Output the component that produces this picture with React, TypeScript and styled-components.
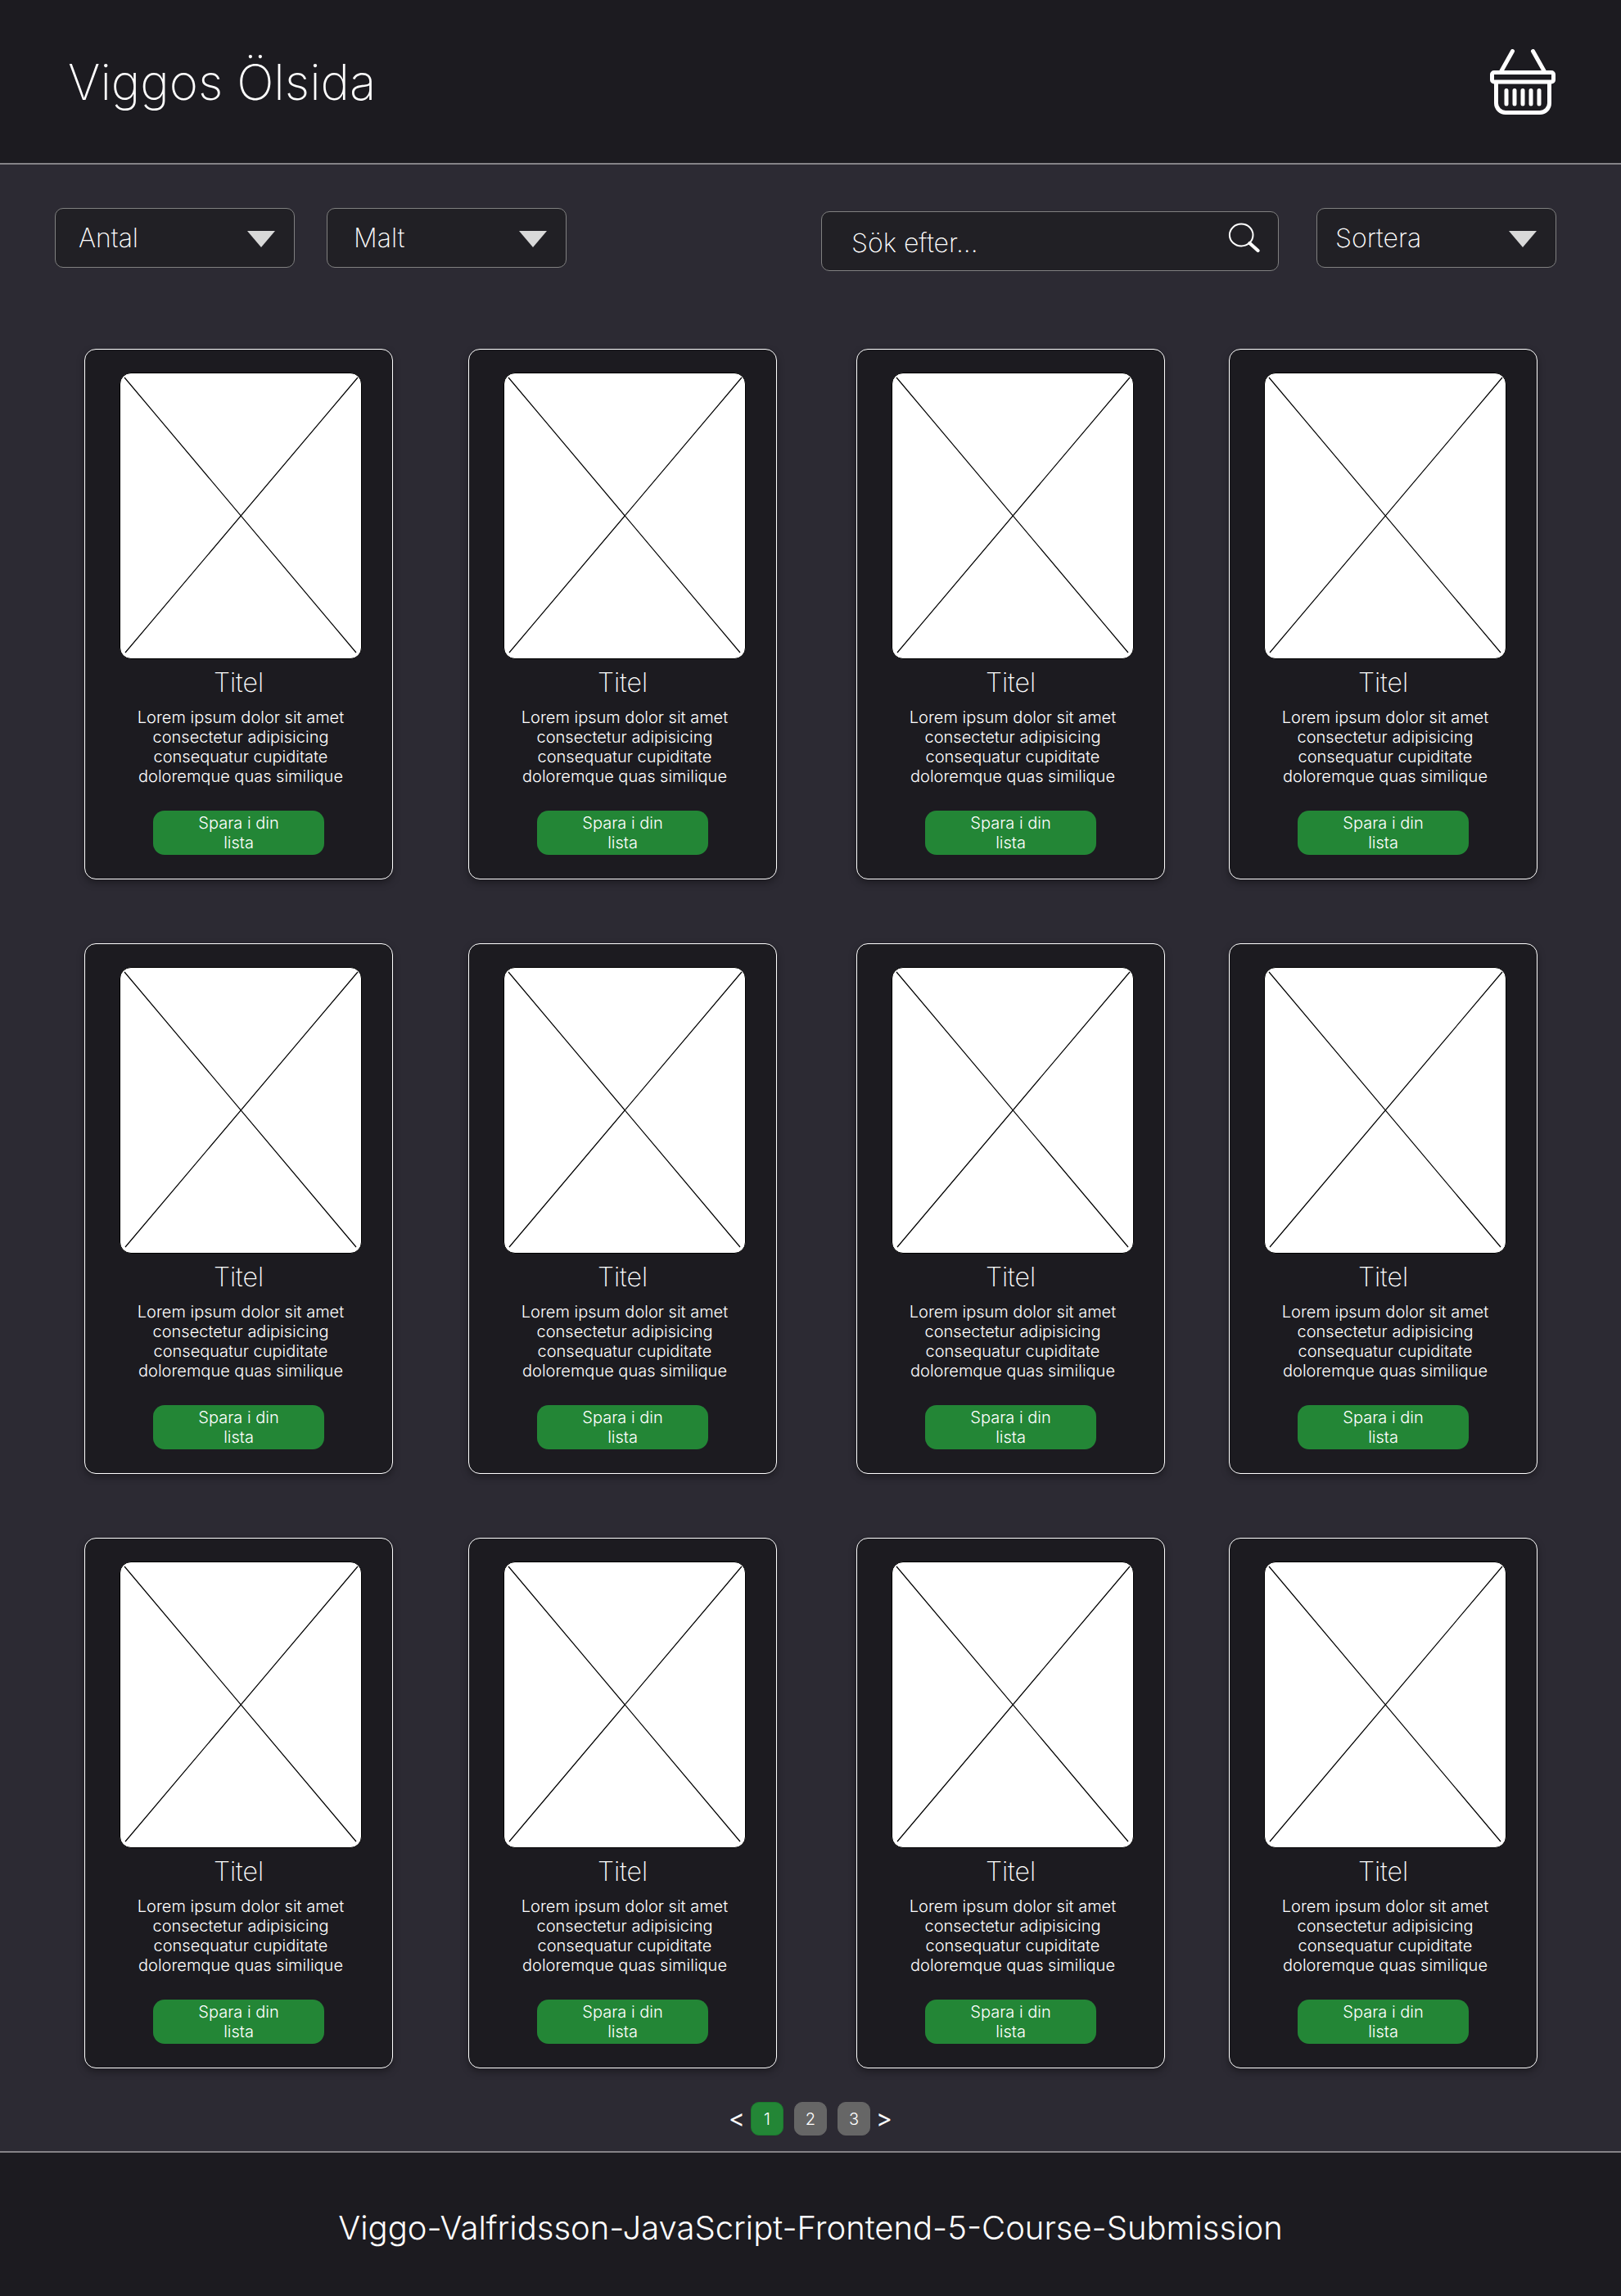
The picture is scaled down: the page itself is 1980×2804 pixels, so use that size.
import React from "react";
import styled, { createGlobalStyle, css } from "styled-components";

const color = {
  page: "#2c2a33",
  surface: "#1c1b20",
  field: "#212025",
  fieldBorder: "#808080",
  rule: "#858387",
  green: "#238636",
  greenDark: "#1b7a2e",
  grey: "#666666",
  arrow: "#d9d9d9",
  text: "#ffffff",
};

const GlobalStyle = createGlobalStyle`
  *, *::before, *::after { box-sizing: border-box; }
  body {
    margin: 0;
    background: ${color.page};
    color: ${color.text};
    font-family: Inter, "Liberation Sans", sans-serif;
    font-weight: 300;
  }
  button, input, select { font: inherit; color: inherit; }
  h1, h2, p { margin: 0; font-weight: inherit; }
`;

const Page = styled.div`
  display: flex;
  flex-direction: column;
  min-height: 100vh;
`;

const Header = styled.header`
  display: flex;
  align-items: center;
  justify-content: space-between;
  padding: 60px 80px 59px 83px;
  background: ${color.surface};
  border-bottom: 2px solid ${color.rule};
`;

const SiteTitle = styled.h1`
  && { font-weight: 200; }
  font-size: 60px;
  line-height: 72px;
`;

const CartButton = styled.button`
  display: block;
  padding: 0;
  border: 0;
  background: none;
  cursor: pointer;
  svg { display: block; }
`;

const Toolbar = styled.div`
  display: flex;
  justify-content: space-between;
  gap: 40px;
  padding: 53px 79px 0 67px;
`;

const ToolGroup = styled.div<{ $gap: number; $end?: boolean }>`
  display: flex;
  flex: ${(p) => (p.$end ? "0 1 898px" : "0 1 auto")};
  gap: ${(p) => p.$gap}px;
  min-height: 77px;
`;

const fieldBox = css`
  height: 73px;
  background: ${color.field};
  border: 1px solid ${color.fieldBorder};
  border-radius: 10px;
`;

const SelectBox = styled.label`
  position: relative;
  flex: 0 0 293px;
  align-self: flex-start;
  svg {
    position: absolute;
    right: 24px;
    top: 28px;
    pointer-events: none;
  }
`;

const Select = styled.select<{ $inset: number }>`
  ${fieldBox}
  display: block;
  width: 100%;
  padding: 0 64px 0 ${(p) => p.$inset}px;
  appearance: none;
  font-size: 32px;
  font-weight: 200;
`;

const SearchForm = styled.form`
  ${fieldBox}
  display: flex;
  flex: 1 1 0;
  align-self: flex-end;
  align-items: flex-start;
  min-width: 0;
  padding: 0 22px 0 36px;
`;

const SearchInput = styled.input`
  flex: 1;
  width: 0;
  min-width: 0;
  height: 100%;
  padding: 4px 0 0;
  border: 0;
  outline: 0;
  background: none;
  font-size: 32px;
  font-weight: 200;
  &::placeholder { color: ${color.text}; opacity: 1; }
`;

const SearchButton = styled.button`
  padding: 13px 0;
  border: 0;
  background: none;
  cursor: pointer;
  svg { display: block; }
`;

const Products = styled.main`
  display: grid;
  grid-template-columns: 469fr 474fr 455fr 377px;
  row-gap: 78px;
  padding: 95px 102px 41px 103px;
`;

const Card = styled.article`
  width: 377px;
  padding: 28px 37px 29px;
  background: ${color.surface};
  border: 1px solid ${color.text};
  border-radius: 14px;
  box-shadow: 0 4px 10px rgba(0, 0, 0, 0.35);
  text-align: center;
`;

const Photo = styled.svg`
  display: block;
  width: 296px;
  height: 350px;
  margin-left: auto;
  background: #ffffff;
  border: 1px solid #000000;
  border-radius: 14px;
`;

const CardTitle = styled.h2`
  && { font-weight: 200; }
  padding: 9px 0 11px;
  font-size: 32px;
  line-height: 39px;
`;

const Description = styled.p`
  width: 296px;
  margin: 0 0 30px auto;
  padding: 0 20px;
  font-size: 20px;
  line-height: 24px;
`;

const SaveButton = styled.button`
  display: block;
  width: 209px;
  margin: 0 auto;
  padding: 3px 40px;
  border: 0;
  border-radius: 14px;
  background: ${color.green};
  font-size: 20px;
  line-height: 24px;
  cursor: pointer;
`;

const Pagination = styled.nav`
  display: flex;
  justify-content: center;
  align-items: center;
  margin-bottom: 19px;
`;

const PageNumbers = styled.div`
  display: flex;
  gap: 13px;
`;

const PageButton = styled.button<{ $current: boolean }>`
  width: 40px;
  height: 41px;
  padding: 0;
  border: 1px solid ${(p) => (p.$current ? color.greenDark : color.grey)};
  border-radius: 10px;
  background: ${(p) => (p.$current ? color.green : color.grey)};
  font-size: 20px;
  cursor: pointer;
`;

const StepButton = styled.button`
  width: 34px;
  height: 41px;
  padding: 0;
  border: 0;
  background: none;
  font-size: 30px;
  font-weight: 400;
  line-height: 41px;
  cursor: pointer;
`;

const Footer = styled.footer`
  flex: 1;
  padding: 68px 40px 59px;
  background: ${color.surface};
  border-top: 2px solid ${color.rule};
  font-size: 40px;
  line-height: 48px;
  text-align: center;
`;

function BasketIcon() {
  return (
    <svg width="80" height="80" viewBox="0 0 80 80" fill="none" stroke="#fff" strokeWidth="5" strokeLinecap="round" aria-hidden="true">
      <path d="M27.5 2.5 14 26.5M52.5 2.5 66 26.5" />
      <rect x="2.5" y="28.5" width="75" height="11.5" rx="2.5" />
      <path d="M7.5 41v25A11.5 11.5 0 0 0 19 77.5h42A11.5 11.5 0 0 0 72.5 66V41" />
      <path d="M20 50.5V67M30 50.5V67M40 50.5V67M50 50.5V67M60 50.5V67" />
    </svg>
  );
}

function SearchIcon() {
  return (
    <svg width="39" height="37" viewBox="0 0 39 37" fill="none" stroke="#fff" aria-hidden="true">
      <ellipse cx="16.2" cy="15" rx="14.3" ry="13.4" strokeWidth="2" />
      <path d="M26.5 25 36.5 34" strokeWidth="4.2" strokeLinecap="round" />
    </svg>
  );
}

function Dropdown({ label, inset }: { label: string; inset: number }) {
  return (
    <SelectBox>
      <Select $inset={inset} aria-label={label} defaultValue={label}>
        <option>{label}</option>
      </Select>
      <svg width="34" height="20" viewBox="0 0 34 20" aria-hidden="true">
        <path d="M0 0h34L17 20z" fill={color.arrow} />
      </svg>
    </SelectBox>
  );
}

function ProductCard() {
  return (
    <Card>
      <Photo viewBox="0 0 294 348" role="img" aria-label="Produktbild">
        <path d="M5 5 288 341M6 341 290 5" stroke="#000" strokeWidth="1.2" />
      </Photo>
      <CardTitle>Titel</CardTitle>
      <Description>
        Lorem ipsum dolor sit amet consectetur adipisicing consequatur cupiditate doloremque quas similique
      </Description>
      <SaveButton type="button">Spara i din lista</SaveButton>
    </Card>
  );
}

const products = Array.from({ length: 12 }, (_, i) => i);
const pages = [1, 2, 3];

export default function App() {
  const [current, setCurrent] = React.useState(1);
  return (
    <Page>
      <GlobalStyle />
      <Header>
        <SiteTitle>Viggos Ölsida</SiteTitle>
        <CartButton type="button" aria-label="Varukorg">
          <BasketIcon />
        </CartButton>
      </Header>
      <Toolbar>
        <ToolGroup $gap={39}>
          <Dropdown label="Antal" inset={28} />
          <Dropdown label="Malt" inset={32} />
        </ToolGroup>
        <ToolGroup $gap={46} $end>
          <SearchForm role="search" onSubmit={(e) => e.preventDefault()}>
            <SearchInput type="search" placeholder="Sök efter..." aria-label="Sök efter" />
            <SearchButton type="submit" aria-label="Sök">
              <SearchIcon />
            </SearchButton>
          </SearchForm>
          <Dropdown label="Sortera" inset={22} />
        </ToolGroup>
      </Toolbar>
      <Products>
        {products.map((id) => (
          <ProductCard key={id} />
        ))}
      </Products>
      <Pagination aria-label="Sidor">
        <StepButton type="button" aria-label="Föregående" onClick={() => setCurrent(Math.max(1, current - 1))}>
          &lt;
        </StepButton>
        <PageNumbers>
          {pages.map((n) => (
            <PageButton key={n} type="button" $current={n === current} onClick={() => setCurrent(n)}>
              {n}
            </PageButton>
          ))}
        </PageNumbers>
        <StepButton type="button" aria-label="Nästa" onClick={() => setCurrent(Math.min(pages.length, current + 1))}>
          &gt;
        </StepButton>
      </Pagination>
      <Footer>Viggo-Valfridsson-JavaScript-Frontend-5-Course-Submission</Footer>
    </Page>
  );
}
